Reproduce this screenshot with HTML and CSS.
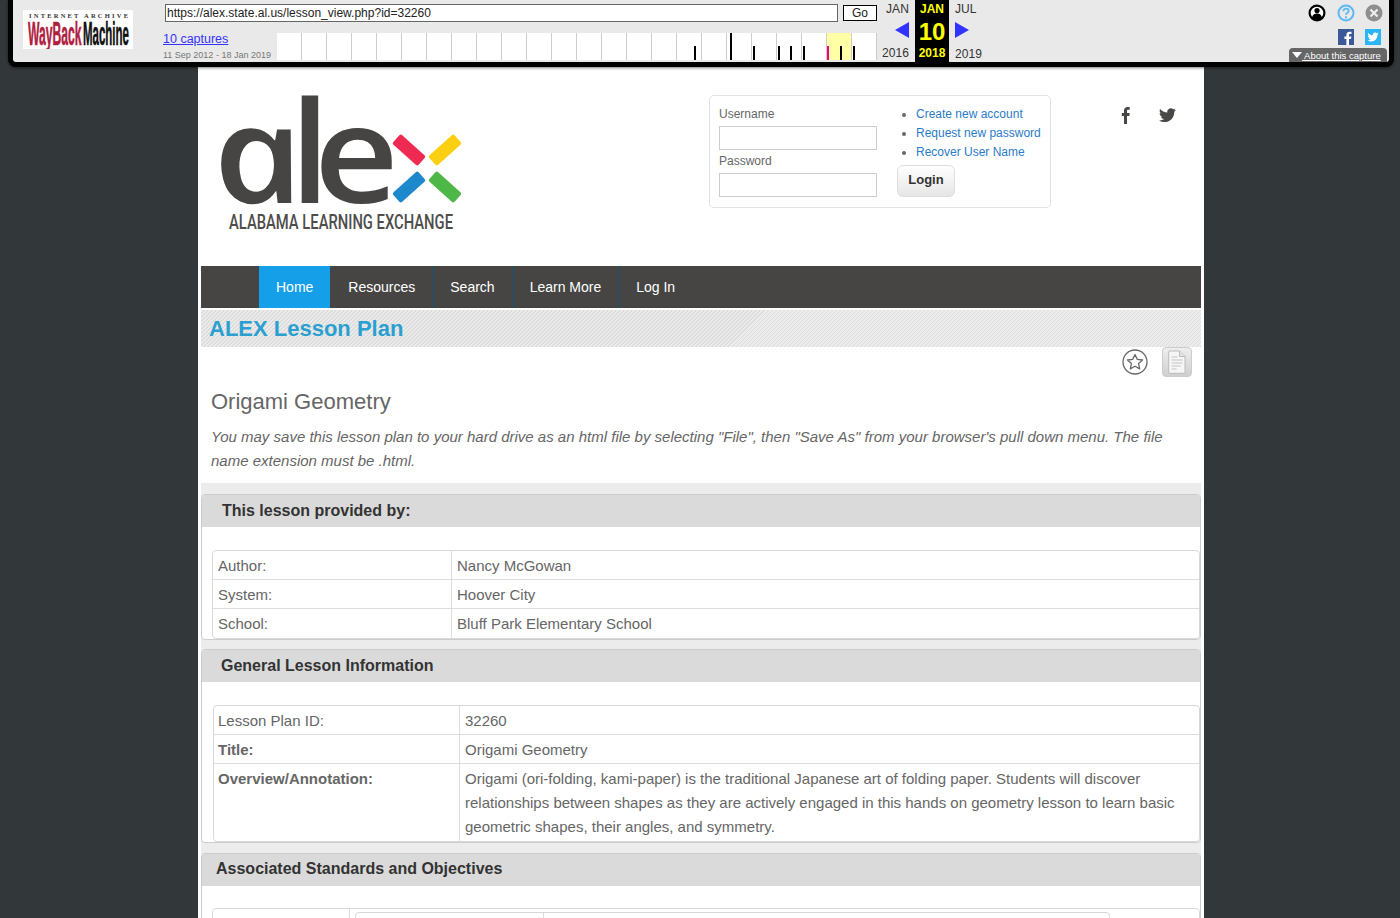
FILE: index.html
```html
<!DOCTYPE html>
<html lang="en">
<head>
<meta charset="utf-8">
<title>ALEX Lesson Plan</title>
<link rel="stylesheet" href="styles.css">
</head>
<body>
<div class="toolbar">
  <svg class="wb-logo" viewBox="0 0 110 39" width="110" height="39" role="img" aria-label="Internet Archive Wayback Machine">
    <rect width="110" height="39" fill="#fff"/>
    <text class="wb-ia" x="6" y="8" textLength="99" lengthAdjust="spacing">INTERNET ARCHIVE</text>
    <text class="wb-way" transform="translate(5 35) scale(.357 1)">WayBack</text>
    <text class="wb-mach" transform="translate(60 35) scale(.338 1)">Machine</text>
  </svg>
  <div class="tb-main">
    <div class="tb-url">
      <div class="tb-input">https://alex.state.al.us/lesson_view.php?id=32260</div>
      <div class="tb-go">Go</div>
    </div>
    <div class="tb-spark-row">
      <div class="tb-caps">
        <a class="tb-captures" href="#">10 captures</a>
        <div class="tb-dates">11 Sep 2012 - 18 Jan 2019</div>
      </div>
      <div class="spark">
        <span class="spark-year"></span>
        <i class="tick t1"></i><i class="tick tall t2"></i><i class="tick t3"></i><i class="tick t4"></i><i class="tick t5"></i><i class="tick t6"></i><i class="tick pink t7"></i><i class="tick t8"></i><i class="tick t9"></i>
      </div>
    </div>
  </div>
  <div class="cal cal-prev">
    <div class="cal-mon">JAN</div>
    <svg class="cal-arrow" width="14" height="16" viewBox="0 0 14 16"><polygon points="14,0 14,16 0,8" fill="#3333ff"/></svg>
    <div class="cal-year">2016</div>
  </div>
  <div class="cal-cur">
    <div class="cur-mon">JAN</div>
    <div class="cur-day">10</div>
    <div class="cur-year">2018</div>
  </div>
  <div class="cal cal-next">
    <div class="cal-mon">JUL</div>
    <svg class="cal-arrow" width="14" height="16" viewBox="0 0 14 16"><polygon points="0,0 0,16 14,8" fill="#3333ff"/></svg>
    <div class="cal-year">2019</div>
  </div>
  <div class="tb-tools">
    <div class="tools-row tools-top">
      <svg width="18" height="18" viewBox="0 0 18 18"><circle cx="9" cy="9" r="7.4" fill="#fff" stroke="#000" stroke-width="2.2"/><circle cx="9" cy="6.6" r="2.6" fill="#000"/><path d="M3.8 14c.6-3.2 2.6-4.6 5.2-4.6s4.600 1.400 5.200 4.600a7 7 0 0 1-10.400 0z" fill="#000"/></svg>
      <svg width="18" height="18" viewBox="0 0 18 18"><circle cx="9" cy="9" r="7.500" fill="none" stroke="#5cb8f5" stroke-width="2"/><path d="M6.400 7.200c0-1.700 1.200-2.600 2.700-2.600s2.600.9 2.600 2.200c0 2-2.700 2-2.700 4" fill="none" stroke="#5cb8f5" stroke-width="1.800"/><rect x="8" y="12.300" width="2" height="2" fill="#5cb8f5"/></svg>
      <svg width="18" height="18" viewBox="0 0 18 18"><circle cx="9" cy="9" r="8.500" fill="#8f8f8f"/><path d="M5.500 5.500l7 7M12.500 5.500l-7 7" stroke="#eee" stroke-width="2.200"/></svg>
    </div>
    <div class="tools-row tools-social">
      <svg width="16" height="16" viewBox="0 0 16 16"><rect width="16" height="16" fill="#3b5998"/><path d="M11 16v-6h2l.4-2.400H11V6.200c0-.8.3-1.200 1.200-1.200h1.300V2.800c-.4 0-1.200-.1-1.900-.1-1.900 0-3.200 1.100-3.200 3.200v1.700H6.400V10h2v6z" fill="#fff"/></svg>
      <svg width="16" height="16" viewBox="0 0 24 24"><rect width="24" height="24" fill="#2cb5f5"/><path transform="translate(3.600 3.600) scale(.7)" d="M23.953 4.57a10 10 0 01-2.825.775 4.958 4.958 0 002.163-2.723c-.951.555-2.005.959-3.127 1.184a4.92 4.92 0 00-8.384 4.482C7.69 8.095 4.067 6.13 1.64 3.162a4.822 4.822 0 00-.666 2.475c0 1.71.87 3.213 2.188 4.096a4.904 4.904 0 01-2.228-.616v.06a4.923 4.923 0 003.946 4.827 4.996 4.996 0 01-2.212.085 4.936 4.936 0 004.604 3.417 9.867 9.867 0 01-6.102 2.105c-.39 0-.779-.023-1.17-.067a13.995 13.995 0 007.557 2.209c9.053 0 13.998-7.496 13.998-13.985 0-.21 0-.42-.015-.63A9.935 9.935 0 0024 4.59z" fill="#fff"/></svg>
    </div>
    <div class="about"><span class="about-arrow"></span><a href="#"> About this capture</a></div>
  </div>
</div>

<div class="page">
  <div class="inner">
    <header class="site-head">
      <svg class="alex-logo" viewBox="201 95 300 140" width="300" height="140" role="img" aria-label="alex Alabama Learning Exchange">
        <text class="logo-a" x="0" y="0" transform="translate(222 203) skewX(14) scale(1.14 1)">a</text>
        <text class="logo-l" x="0" y="0" transform="translate(290 203) scale(1.05 1.04)">l</text>
        <text class="logo-e" x="0" y="0" transform="translate(314 203) scale(1.08 1)">e</text>
        <rect x="392" y="143.500" width="34" height="13" rx="2" transform="rotate(42 409 150)" fill="#ee2a52"/>
        <rect x="428" y="143.500" width="34" height="13" rx="2" transform="rotate(-42 445 150)" fill="#fcd012"/>
        <rect x="392" y="180.500" width="34" height="13" rx="2" transform="rotate(-42 409 187)" fill="#1e88cc"/>
        <rect x="428" y="180.500" width="34" height="13" rx="2" transform="rotate(42 445 187)" fill="#4db848"/>
        <text class="logo-sub" x="229" y="229" textLength="224" lengthAdjust="spacingAndGlyphs">ALABAMA LEARNING EXCHANGE</text>
      </svg>
      <div class="login">
        <div class="login-fields">
          <label class="login-label">Username</label>
          <div class="login-input"></div>
          <label class="login-label login-label-2">Password</label>
          <div class="login-input"></div>
        </div>
        <div class="login-side">
          <ul class="login-links">
            <li><a href="#">Create new account</a></li>
            <li><a href="#">Request new password</a></li>
            <li><a href="#">Recover User Name</a></li>
          </ul>
          <div class="login-btn">Login</div>
        </div>
      </div>
      <div class="social">
        <svg width="14" height="18" viewBox="0 0 14 18"><path d="M5 18V10H2.800V7H5V4.700C5 2.200 6.400 1 8.500 1c.9 0 1.800.1 2.200.1v2.700H9.300C8.200 3.800 8 4.300 8 5.100V7h2.700l-.4 3H8v8z" fill="#4a4846"/></svg>
        <svg width="17" height="15" viewBox="0 0 24 21"><path transform="translate(0 -2)" d="M23.953 4.570a10 10 0 01-2.825.775 4.958 4.958 0 002.163-2.723c-.951.555-2.005.959-3.127 1.184a4.920 4.920 0 00-8.384 4.482C7.690 8.095 4.067 6.130 1.640 3.162a4.822 4.822 0 00-.666 2.475c0 1.710.870 3.213 2.188 4.096a4.904 4.904 0 01-2.228-.616v.060a4.923 4.923 0 003.946 4.827 4.996 4.996 0 01-2.212.085 4.936 4.936 0 004.604 3.417 9.867 9.867 0 01-6.102 2.105c-.390 0-.779-.023-1.170-.067a13.995 13.995 0 007.557 2.209c9.053 0 13.998-7.496 13.998-13.985 0-.210 0-.420-.015-.630A9.935 9.935 0 0024 4.590z" fill="#4a4846"/></svg>
      </div>
    </header>

    <nav class="nav">
      <a class="nav-item active" href="#">Home</a>
      <a class="nav-item" href="#">Resources</a>
      <a class="nav-item" href="#">Search</a>
      <a class="nav-item" href="#">Learn More</a>
      <a class="nav-item last" href="#">Log In</a>
    </nav>

    <div class="banner"><h1 class="banner-title">ALEX Lesson Plan</h1></div>

    <div class="tools">
      <svg width="26" height="26" viewBox="0 0 26 26"><circle cx="13" cy="13" r="12" fill="#fff" stroke="#6a6a6a" stroke-width="1.300"/><polygon points="13,5.500 15.300,10.400 20.600,11 16.600,14.600 17.700,19.900 13,17.200 8.300,19.900 9.400,14.600 5.400,11 10.700,10.400" fill="#fff" stroke="#6a6a6a" stroke-width="1.300" stroke-linejoin="round"/></svg>
      <div class="doc-btn">
        <svg width="18" height="24" viewBox="0 0 18 24"><path d="M1.500 1h10l5.500 5.500V22.500a.8.8 0 0 1-.8.8H1.500a.8.8 0 0 1-.8-.8V1.800a.8.8 0 0 1 .8-.8z" fill="#f6f6f6" stroke="#bbb"/><path d="M11.500 1v5.500H17" fill="#e2e2e2" stroke="#bbb"/><path d="M3.500 7h6M3.500 10h11M3.500 13h11M3.500 16h9M3.500 19h5" stroke="#c4c4c4"/></svg>
      </div>
    </div>

    <section class="intro">
      <h2 class="lesson-title">Origami Geometry</h2>
      <p class="lesson-note">You may save this lesson plan to your hard drive as an html file by selecting "File", then "Save As" from your browser's pull down menu. The file name extension must be .html.</p>
    </section>

    <div class="panels">
      <section class="panel panel-1">
        <h3 class="panel-head head-1">This lesson provided by:</h3>
        <table class="grid grid-1">
          <colgroup><col class="c-239"><col></colgroup>
          <tr><td>Author:</td><td>Nancy McGowan</td></tr>
          <tr><td>System:</td><td>Hoover City</td></tr>
          <tr class="last-row"><td>School:</td><td>Bluff Park Elementary School</td></tr>
        </table>
      </section>
      <section class="panel">
        <h3 class="panel-head head-2">General Lesson Information</h3>
        <table class="grid grid-2">
          <colgroup><col class="c-246"><col></colgroup>
          <tr><td>Lesson Plan ID:</td><td>32260</td></tr>
          <tr><td><b>Title:</b></td><td>Origami Geometry</td></tr>
          <tr class="last-row"><td><b>Overview/Annotation:</b></td><td>Origami (ori-folding, kami-paper) is the traditional Japanese art of folding paper. Students will discover relationships between shapes as they are actively engaged in this hands on geometry lesson to learn basic geometric shapes, their angles, and symmetry.</td></tr>
        </table>
      </section>
      <section class="panel">
        <h3 class="panel-head head-3">Associated Standards and Objectives</h3>
        <table class="grid grid-3">
          <colgroup><col class="c-137"><col></colgroup>
          <tr><td></td><td class="nest-cell">
            <table class="nested"><colgroup><col class="c-188"><col></colgroup><tr><td></td><td></td></tr></table>
          </td></tr>
        </table>
      </section>
    </div>
  </div>
</div>
</body>
</html>
```
FILE: styles.css
```css
html, body { margin: 0; padding: 0; height: 918px; overflow: hidden; }
body { background: #323739; font-family: "Liberation Sans", Arial, sans-serif; color: #666; font-size: 15px; }
a { text-decoration: none; }

/* Wayback toolbar: overlays the page */
.toolbar {
  position: absolute; left: 8px; top: 0; width: 1376px; height: 62px;
  background: #e9e9e9; border: 5px solid #000; border-top: 0; border-radius: 0 0 8px 8px;
  box-shadow: 0 1px 3px rgba(0,0,0,.5);
  display: flex; align-items: flex-start; color: #333; z-index: 5;
}
.wb-logo { margin: 10px 0 0 10px; flex: none; overflow: hidden; }
.wb-ia { font: bold 6.5px "Liberation Serif", serif; fill: #333; }
.wb-way { font: bold 34px "Liberation Sans", sans-serif; fill: #b0213f; stroke: #b0213f; stroke-width: .6px; }
.wb-mach { font: bold 34px "Liberation Sans", sans-serif; fill: #111; stroke: #111; stroke-width: .6px; }

.tb-main { width: 714px; margin-left: 30px; flex: none; }
.tb-url { display: flex; padding: 4px 0 0 2px; }
.tb-input { width: 670px; height: 16px; border: 1px solid #666; background: #fff; font-size: 12px; line-height: 16px; color: #222; padding-left: 1px; }
.tb-go { width: 32px; height: 14px; margin: 1px 0 0 5px; border: 1px solid #000; background: #fff; font-size: 12px; line-height: 14px; text-align: center; color: #222; }
.tb-spark-row { display: flex; margin-top: 11px; }
.tb-caps { width: 114px; flex: none; }
.tb-captures { display: block; font-size: 12.5px; line-height: 13px; color: #3333ff; text-decoration: underline; }
.tb-dates { font-size: 9px; line-height: 12px; color: #777; margin-top: 3px; white-space: nowrap; }
.spark {
  position: relative; width: 600px; height: 27px; background-color: #fff;
  background-image: repeating-linear-gradient(90deg, #fff 0, #fff 24px, #ccc 24px, #ccc 25px);
}
.spark-year { position: absolute; left: 550px; top: 0; width: 24px; height: 27px; background: #ffffa5; }
.tick { position: absolute; bottom: 0; width: 2px; height: 14px; background: #000; }
.tick.tall { height: 27px; }
.tick.pink { background: #ec008c; }
.t1 { left: 417px; } .t2 { left: 453px; } .t3 { left: 476px; } .t4 { left: 501px; } .t5 { left: 513px; }
.t6 { left: 526px; } .t7 { left: 550px; } .t8 { left: 563px; } .t9 { left: 576px; }

.cal { width: 33px; flex: none; font-size: 12px; color: #333; letter-spacing: .1px; }
.cal-prev { margin-left: 0; text-align: right; width: 32px; }
.cal-next { margin-left: 6px; width: 40px; }
.cal-mon { height: 18px; line-height: 18px; }
.cal-arrow { display: block; margin-top: 4px; }
.cal-prev .cal-arrow { margin-left: 18px; }
.cal-year { margin-top: 8px; line-height: 14px; }
.cal-next .cal-year { margin-top: 9px; }
.cal-cur { width: 34px; height: 62px; margin-left: 6px; flex: none; background: #000; color: #ff0; text-align: center; font-weight: bold; }
.cur-mon { font-size: 12px; line-height: 18px; }
.cur-day { font-size: 24px; line-height: 28px; }
.cur-year { font-size: 12px; line-height: 14px; }

.tb-tools { position: relative; margin-left: auto; width: 100px; height: 62px; flex: none; }
.tools-row { display: flex; }
.tools-top { margin: 4px 0 0 19px; gap: 10.5px; }
.tools-social { margin: 7px 0 0 49px; gap: 11px; }
.about {
  position: absolute; right: 2px; bottom: 0; width: 98px; height: 14px; box-sizing: border-box; padding-left: 3px;
  background: #666; border-radius: 4px 4px 0 0; font-size: 9.5px; line-height: 16px; color: #fff; white-space: nowrap;
}
.about a { color: #fff; text-decoration: underline; }
.about-arrow { display: inline-block; border: 5px solid transparent; border-top: 6px solid #fff; border-bottom: 0; vertical-align: 1px; }

/* Page */
.page { width: 1006px; margin-left: 198px; padding-top: 67px; background: #fff; height: 851px; overflow: hidden; }
.inner { margin: 0 3px; }
.site-head { display: flex; align-items: flex-start; height: 171px; padding-top: 28px; }
.alex-logo { flex: none; overflow: visible; }
.logo-a { font: italic 600 136px "Open Sans", sans-serif; fill: #474543; }
.logo-l { font: 600 136px "Open Sans", sans-serif; fill: #474543; }
.logo-e { font: 600 136px "Open Sans", sans-serif; fill: #474543; }
.logo-sub { font: 500 20px Roboto, sans-serif; fill: #4f4d4b; }

.login {
  display: flex; box-sizing: border-box; width: 342px; height: 113px; margin-left: 208px; padding: 9px 9px 0;
  border: 1px solid #e3e3e3; border-radius: 5px; flex: none;
}
.login-fields { width: 158px; flex: none; }
.login-label { display: block; font-size: 12px; line-height: 16px; color: #666; margin-top: 1px; }
.login-label-2 { margin-top: 3px; }
.login-input { box-sizing: border-box; height: 24px; margin-top: 4px; border: 1px solid #ccc; background: #fff; }
.login-side { margin-left: 20px; }
.login-links { margin: 0; padding: 0 0 0 19px; font-size: 12px; line-height: 19px; color: #666; white-space: nowrap; }
.login-links a { color: #2a7bc8; }
.login-btn {
  box-sizing: border-box; width: 58px; height: 32px; margin-top: 3px; border: 1px solid #ddd; border-radius: 6px;
  background: linear-gradient(#fff, #e6e6e6); font-size: 13px; font-weight: bold; line-height: 27px; text-align: center; color: #333;
}
.social { display: flex; align-items: center; gap: 26px; margin: 11px 0 0 68px; }

.nav { display: flex; height: 42px; background: #474543; padding-left: 58px; }
.nav-item { display: block; padding: 0 17px; line-height: 42px; font-size: 14px; color: #fff; border-right: 1px solid #14567a; }
.nav-item.active { background: #159fe8; border-right-color: #474543; }
.nav-item.last { border-right: 0; }

.banner {
  height: 37px; margin-top: 2px; padding-left: 8px;
  background: repeating-linear-gradient(135deg, #ececec 0, #ececec 1.9px, #dcdcdc 1.9px, #dcdcdc 2.83px);
}
.banner-title { margin: 0; font-size: 22px; line-height: 37px; font-weight: bold; color: #2ba0d0; }

.tools { display: flex; justify-content: flex-end; align-items: center; gap: 14px; height: 30px; padding-right: 9px; }
.doc-btn {
  box-sizing: border-box; width: 30px; height: 30px; display: flex; align-items: center; justify-content: center;
  border: 1px solid #ccc; border-radius: 4px; background: linear-gradient(#eee, #cfcfcf);
}
.intro { padding: 0 10px; height: 95px; }
.lesson-title { margin: 11px 0 0; font-size: 22px; line-height: 28px; font-weight: normal; color: #666; }
.lesson-note { margin: 9px 0 0; font-size: 15px; line-height: 24px; font-style: italic; color: #666; }

.panels { background: #ececec; padding-top: 11px; }
.panel { border: 1px solid #ccc; border-radius: 4px; background: #fff; margin-bottom: 10px; }
.panel-1 { margin-bottom: 9px; }
.panel-head { margin: 0 0 23px; height: 32px; line-height: 31px; background: #dadada; font-size: 16px; font-weight: bold; color: #333; }
.head-1 { padding-left: 20px; }
.head-2 { padding-left: 19px; }
.head-3 { padding-left: 14px; line-height: 30px; margin-bottom: 22px; }

.grid { border-collapse: separate; border-spacing: 0; table-layout: fixed; border: 1px solid #d8d8d8; border-radius: 4px; font-size: 15px; line-height: 24px; color: #666; }
.grid td { padding: 3px 5px 1px; border-bottom: 1px solid #ddd; border-right: 1px solid #ddd; vertical-align: top; box-sizing: border-box; }
.grid td:last-child { border-right: 0; }
.grid .last-row td { border-bottom: 0; padding-bottom: 2px; }
.grid-1 { width: 988px; margin-left: 10px; }
.grid-2 { width: 987px; margin-left: 11px; }
.grid-2 td:first-child { padding-left: 4px; }
.grid-3 { width: 988px; margin-left: 10px; }
.c-239 { width: 239px; }
.c-246 { width: 246px; }
.c-137 { width: 137px; }
.c-188 { width: 188px; }
.nested { width: 755px; border-collapse: separate; border-spacing: 0; table-layout: fixed; border: 1px solid #d8d8d8; border-radius: 4px; }
.nested td { height: 40px; }
```
